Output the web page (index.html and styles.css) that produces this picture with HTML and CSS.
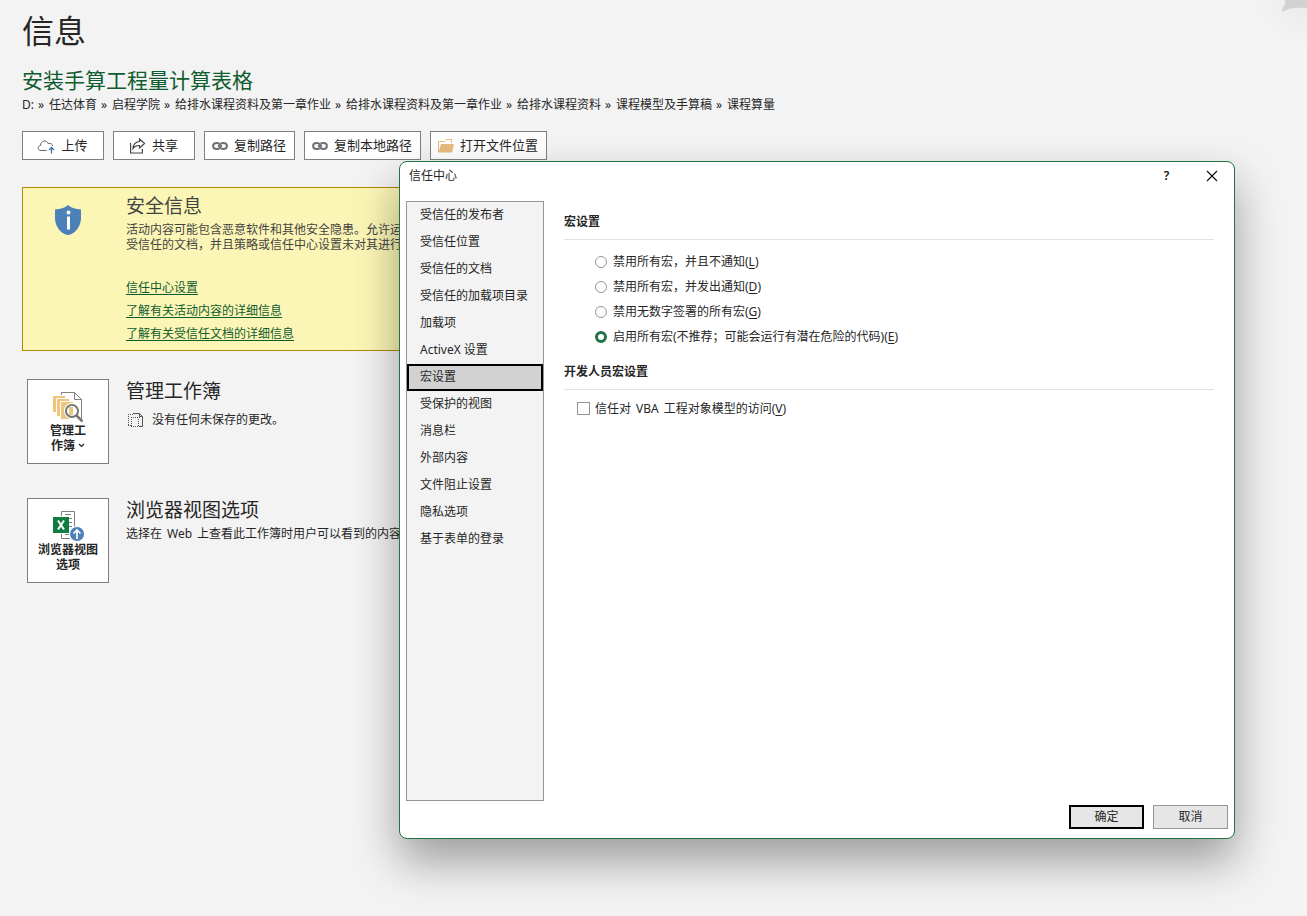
FILE: index.html
```html
<!DOCTYPE html>
<html lang="zh-CN">
<head>
<meta charset="utf-8">
<title>信息</title>
<link rel="stylesheet" href="styles.css">
</head>
<body>
<main class="page">
  <svg class="page-art" viewBox="0 0 60 50" width="60" height="50" aria-hidden="true">
    <defs>
      <radialGradient id="haze" cx="1" cy="0" r="0.9">
        <stop offset="0" stop-color="#e8e8e8"/>
        <stop offset="0.5" stop-color="#efefef"/>
        <stop offset="1" stop-color="#f3f3f3"/>
      </radialGradient>
    </defs>
    <rect width="60" height="50" fill="url(#haze)"/>
    <path d="M37 0H60V8C50 7 41 8 35 12C35 8 37 6 39 3Z" fill="#d2d2d2"/>
  </svg>

  <h1 class="page-title">信息</h1>
  <h2 class="file-name">安装手算工程量计算表格</h2>
  <p class="file-path">
    <span>D:</span><span class="sep">»</span><span>任达体育</span><span class="sep">»</span><span>启程学院</span><span class="sep">»</span><span>给排水课程资料及第一章作业</span><span class="sep">»</span><span>给排水课程资料及第一章作业</span><span class="sep">»</span><span>给排水课程资料</span><span class="sep">»</span><span>课程模型及手算稿</span><span class="sep">»</span><span>课程算量</span>
  </p>

  <div class="actions">
    <button class="action" type="button">
      <svg width="18" height="16" viewBox="0 0 18 16" fill="none"><path d="M9.500 12.500H4C0.500 12.500 0.200 8 3.500 7.500C3.500 2.500 9.500 1.200 11 5.500C13.500 5 15.500 6 15.500 8" stroke="#666"/><path d="M14.500 15.500V9.500M12 12L14.500 9.500L17 12" stroke="#3b78b5" stroke-width="1.300"/></svg>
      <span>上传</span>
    </button>
    <button class="action" type="button">
      <svg width="17" height="16" viewBox="0 0 17 16" fill="none" stroke="#444" stroke-width="1.200"><path d="M1.600 5V15H13.400V11"/><path d="M10.500 1L15.500 5.500L10.500 10V7.500C7.500 7.300 5.500 8.300 4 10.500C4.200 6.500 6.500 4 10.500 3.500Z"/></svg>
      <span>共享</span>
    </button>
    <button class="action" type="button">
      <svg width="16" height="16" viewBox="0 0 16 16" fill="none" stroke="#707070" stroke-width="2"><path d="M7.500 10.500C6.500 11 5.500 11 4.500 11C0 11 0 5 4.500 5C7.500 5 8.500 6 9.500 9"/><path d="M8.500 5.500C9.500 5 10.500 5 11.500 5C16 5 16 11 11.500 11C8.500 11 7.500 10 6.500 7"/></svg>
      <span>复制路径</span>
    </button>
    <button class="action" type="button">
      <svg width="16" height="16" viewBox="0 0 16 16" fill="none" stroke="#707070" stroke-width="2"><path d="M7.500 10.500C6.500 11 5.500 11 4.500 11C0 11 0 5 4.500 5C7.500 5 8.500 6 9.500 9"/><path d="M8.500 5.500C9.500 5 10.500 5 11.500 5C16 5 16 11 11.500 11C8.500 11 7.500 10 6.500 7"/></svg>
      <span>复制本地路径</span>
    </button>
    <button class="action" type="button">
      <svg width="16" height="16" viewBox="0 0 16 16"><path d="M0.500 14V3.500H6.500L8.500 1.500H13.500V5" fill="none" stroke="#e6bd80"/><path d="M3 6H16L14 14.500H0.500Z" fill="#e6bd80"/></svg>
      <span>打开文件位置</span>
    </button>
  </div>

  <section class="notice">
    <div class="notice-icon">
      <svg width="28" height="32" viewBox="0 0 28 32"><path d="M14 1C17 4 22 5 27 5.500V14C27 22 22 28 17 30.300Q14 31.500 11 30.300C6 28 1 22 1 14V5.500C6 5 11 4 14 1Z" fill="#4c80b9"/><circle cx="14.500" cy="8.500" r="2" fill="#fff"/><path d="M13 12.500H16V25.500H13Z" fill="#fff"/></svg>
    </div>
    <div class="notice-body">
      <h3 class="section-title">安全信息</h3>
      <p class="notice-text">活动内容可能包含恶意软件和其他安全隐患。允许运行<br>受信任的文档，并且策略或信任中心设置未对其进行</p>
      <ul class="notice-links">
        <li><a href="#">信任中心设置</a></li>
        <li><a href="#">了解有关活动内容的详细信息</a></li>
        <li><a href="#">了解有关受信任文档的详细信息</a></li>
      </ul>
    </div>
  </section>

  <section class="info-row">
    <button class="tile" type="button">
      <svg width="32" height="32" viewBox="0 0 32 32" fill="none"><path d="M9.500 4V1.500H22.500L29.500 8.500V28.500H27" stroke="#808080"/><path d="M22.500 1.500V8.500H29.500" stroke="#808080"/><g fill="#eec57c" stroke="#fff"><path d="M0.500 4.500H13.500V21.500H0.500Z"/><path d="M4.500 7.500H17.500V25.500H4.500Z"/><path d="M8.500 10.500H21.500V28.500H8.500Z"/></g><circle cx="20" cy="20" r="8" fill="#fff"/><circle cx="20" cy="20" r="6" fill="#fff" stroke="#757575" stroke-width="2"/><path d="M17 16H21V24H17Z" fill="#eec57c"/><path d="M24.500 24.500L30.500 30.500" stroke="#757575" stroke-width="2.500"/></svg>
      <span>管理工<br>作簿 <svg width="7" height="5" viewBox="0 0 7 5" fill="none"><path d="M1 1L3.500 3.500L6 1" stroke="#222" stroke-width="1.200"/></svg></span>
    </button>
    <div>
      <h3 class="section-title">管理工作簿</h3>
      <p class="row-status">
        <svg width="16" height="16" viewBox="0 0 16 16" fill="none" stroke="#555"><path d="M5 1.500H11.500L14.500 4.500V14.500H12"/><path d="M11.500 1.500V4.500H14.500"/><path d="M0 2.500H5M0 13.500H3M3 5.500H12M3 14.500H12M0.500 4V13M3.500 7V14M10.500 7V14" stroke-dasharray="1 1"/></svg>
        <span>没有任何未保存的更改。</span>
      </p>
    </div>
  </section>

  <section class="info-row">
    <button class="tile" type="button">
      <svg width="32" height="32" viewBox="0 0 32 32" fill="none"><path d="M9.500 6V1.500H22.500V17M9.500 24V28.500H18" stroke="#808080"/><path d="M13 4.500H19M17 8.500H20M17 12.500H20M17 16.500H20M13 24.500H17" stroke="#808080"/><path d="M1 7H17V23H1Z" fill="#107c41"/><path d="M6 10.500L12 19.500M12 10.500L6 19.500" stroke="#fff" stroke-width="2"/><circle cx="25" cy="24" r="7.500" fill="#4c80b9" stroke="#fff"/><path d="M25 29V20M21.500 23.500L25 20L28.500 23.500" stroke="#fff" stroke-width="1.700"/></svg>
      <span>浏览器视图<br>选项</span>
    </button>
    <div>
      <h3 class="section-title">浏览器视图选项</h3>
      <p class="row-text"><span>选择在</span><span>Web</span><span>上查看此工作簿时用户可以看到的内容</span></p>
    </div>
  </section>

  <div class="dialog" role="dialog" aria-labelledby="dialog-title">
    <header class="dialog-bar">
      <h2 class="dialog-title" id="dialog-title">信任中心</h2>
      <button class="bar-button" type="button">?</button>
      <button class="bar-button" type="button" aria-label="关闭">
        <svg width="12" height="12" viewBox="0 0 12 12" fill="none"><path d="M1 1L11 11M11 1L1 11" stroke="#111" stroke-width="1.200"/></svg>
      </button>
    </header>

    <div class="dialog-main">
      <nav class="categories">
        <button class="category" type="button">受信任的发布者</button>
        <button class="category" type="button">受信任位置</button>
        <button class="category" type="button">受信任的文档</button>
        <button class="category" type="button">受信任的加载项目录</button>
        <button class="category" type="button">加载项</button>
        <button class="category" type="button">ActiveX 设置</button>
        <button class="category selected" type="button">宏设置</button>
        <button class="category" type="button">受保护的视图</button>
        <button class="category" type="button">消息栏</button>
        <button class="category" type="button">外部内容</button>
        <button class="category" type="button">文件阻止设置</button>
        <button class="category" type="button">隐私选项</button>
        <button class="category" type="button">基于表单的登录</button>
      </nav>

      <div class="settings">
        <h3 class="group-title">宏设置</h3>
        <div class="radios">
          <label class="option"><input class="radio" type="radio" name="macro"><span>禁用所有宏，并且不通知(<u>L</u>)</span></label>
          <label class="option"><input class="radio" type="radio" name="macro"><span>禁用所有宏，并发出通知(<u>D</u>)</span></label>
          <label class="option"><input class="radio" type="radio" name="macro"><span>禁用无数字签署的所有宏(<u>G</u>)</span></label>
          <label class="option"><input class="radio" type="radio" name="macro" checked><span>启用所有宏(不推荐；可能会运行有潜在危险的代码)(<u>E</u>)</span></label>
        </div>
        <h3 class="group-title">开发人员宏设置</h3>
        <div class="checks">
          <label class="option"><input class="check" type="checkbox"><span>信任对</span><span>VBA</span><span>工程对象模型的访问(<u>V</u>)</span></label>
        </div>
      </div>
    </div>

    <footer class="dialog-footer">
      <button class="command default" type="button">确定</button>
      <button class="command" type="button">取消</button>
    </footer>
  </div>
</main>
</body>
</html>
```

FILE: styles.css
```css
* {
  box-sizing: border-box;
}

body {
  margin: 0;
  background: #f3f3f3;
  color: #262626;
  font: 12px/18px "Noto Sans", "Noto Sans CJK SC", sans-serif;
}

h1, h2, h3, p, ul {
  margin: 0;
  padding: 0;
  font-weight: 400;
}

button {
  margin: 0;
  color: inherit;
  font: inherit;
}

svg {
  flex: none;
}

.page {
  position: relative;
  min-height: 100vh;
  padding: 11px 22px;
  overflow: hidden;
}

.page-art {
  position: absolute;
  top: 0;
  right: 0;
}

.page-title {
  font-size: 32px;
  line-height: 40px;
}

.file-name {
  margin-top: 15px;
  color: #0f5c2f;
  font-size: 21px;
  line-height: 28px;
}

.file-path {
  display: flex;
  flex-wrap: wrap;
  gap: 4px;
  margin-top: 2px;
}

.sep {
  width: 7px;
}

.actions {
  display: flex;
  gap: 9px;
  margin-top: 17px;
}

.action {
  display: flex;
  align-items: center;
  justify-content: center;
  gap: 6px;
  min-width: 82px;
  height: 29px;
  padding: 0 8px 0 7px;
  border: 1px solid #7f7f7f;
  background: #fff;
  font-size: 13px;
}

.action span {
  padding-bottom: 2px;
}

.notice {
  display: flex;
  max-width: 720px;
  min-height: 164px;
  margin-top: 27px;
  border: 1px solid #b08800;
  background: #fcf6b6;
  color: #444;
}

.notice-icon {
  width: 103px;
  padding: 16px 0 0 31px;
}

.notice-body {
  padding-top: 6px;
}

.section-title {
  font-size: 19px;
  line-height: 24px;
}

.notice-text {
  margin-top: 4px;
  line-height: 15px;
  white-space: nowrap;
}

.notice-links {
  margin-top: 24px;
  line-height: 23px;
  list-style: none;
}

.notice-links a {
  color: #0f5c2f;
  text-underline-offset: 2px;
}

.info-row {
  display: flex;
  gap: 17px;
  margin: 28px 0 0 5px;
}

.info-row + .info-row {
  margin-top: 34px;
}

.tile {
  display: flex;
  flex-direction: column;
  align-items: center;
  width: 82px;
  height: 85px;
  padding: 11px 0 0;
  border: 1px solid #7f7f7f;
  background: #fff;
  font-weight: 600;
  line-height: 15px;
}

.tile span svg {
  vertical-align: 2px;
}

.row-status {
  display: flex;
  align-items: center;
  gap: 8px;
  margin: 8px 0 0 2px;
}

.row-text {
  display: flex;
  gap: 5px;
  margin-top: 3px;
  white-space: nowrap;
}

.dialog {
  position: absolute;
  inset: 161px 72px 77px 399px;
  display: flex;
  flex-direction: column;
  border: 1px solid #217346;
  border-radius: 8px;
  background: #fff;
  box-shadow: 0 22px 46px rgba(0, 0, 0, 0.36);
}

.dialog-bar {
  display: flex;
  align-items: center;
  height: 28px;
  padding-left: 9px;
}

.dialog-title {
  flex: 1;
  font-size: 12px;
  line-height: 18px;
}

.bar-button {
  display: flex;
  align-items: center;
  justify-content: center;
  width: 45px;
  height: 28px;
  padding: 0;
  border: 0;
  background: none;
  color: #111;
  font-weight: 600;
}

.dialog-main {
  display: flex;
  flex: 1;
  gap: 20px;
  margin-top: 11px;
  padding: 0 20px 0 6px;
}

.categories {
  width: 138px;
  border: 1px solid #969696;
  background: #f3f3f3;
}

.category {
  display: block;
  width: 100%;
  height: 27px;
  padding: 0 11px 2px;
  border: 2px solid transparent;
  background: none;
  text-align: left;
}

.category.selected {
  border-color: #000;
  background: #d2d2d2;
}

.settings {
  flex: 1;
  padding-top: 12px;
}

.group-title {
  padding-bottom: 8px;
  border-bottom: 1px solid #e1e1e1;
  font-size: 12px;
  font-weight: 600;
}

.radios {
  margin: 9px 0 14px;
  padding-left: 31px;
}

.checks {
  margin-top: 6px;
  padding-left: 13px;
}

.option {
  display: flex;
  align-items: center;
  gap: 6px;
  height: 25px;
}

.option u {
  text-underline-offset: 2px;
}

.radio, .check {
  appearance: none;
  width: 12px;
  height: 12px;
  margin: 0;
  border: 1px solid #969696;
  background: #fff;
}

.radio {
  border-radius: 50%;
}

.radio:checked {
  border: 3px solid #217346;
}

.check {
  width: 13px;
  height: 13px;
}

.checks .option {
  gap: 5px;
}

.dialog-footer {
  display: flex;
  justify-content: flex-end;
  gap: 9px;
  padding: 4px 6px 9px;
}

.command {
  width: 75px;
  height: 24px;
  padding: 0;
  border: 1px solid #969696;
  background: #e6e6e6;
  line-height: 18px;
}

.command.default {
  border: 2px solid #000;
}
```
